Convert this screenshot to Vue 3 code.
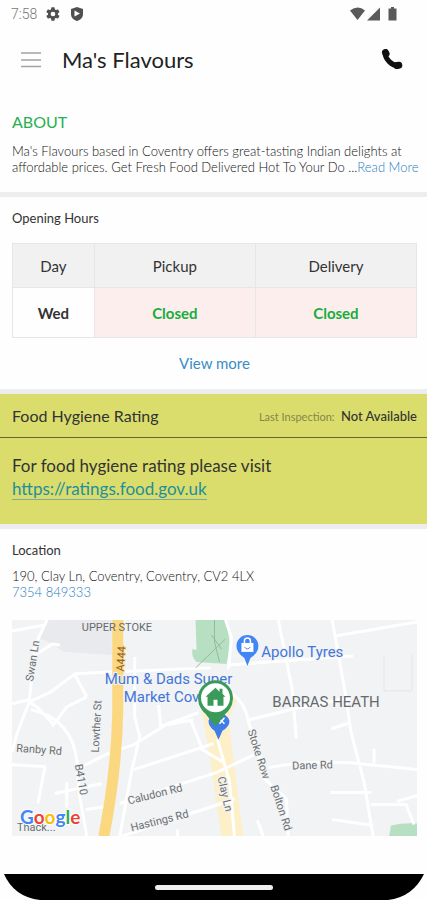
<script setup>
const hours = [{ day: 'Wed', pickup: 'Closed', delivery: 'Closed' }]
</script>

<template>
  <div class="screen">
    <div class="status">
      <div class="status-side">
        <span class="clock">7:58</span>
        <svg class="gear" viewBox="0 0 24 24" width="16" height="16" aria-hidden="true">
          <path fill="#505050" fill-rule="evenodd" d="M19.4 13a7.500 7.500 0 0 0 0-2l2.100-1.600a.5.5 0 0 0 .1-.7l-2-3.400a.5.5 0 0 0-.6-.2l-2.500 1a7.300 7.300 0 0 0-1.700-1l-.4-2.600a.5.5 0 0 0-.5-.5h-4a.5.5 0 0 0-.5.500L9 5.100a7.700 7.700 0 0 0-1.700 1l-2.500-1a.5.5 0 0 0-.6.2l-2 3.400a.5.5 0 0 0 .1.700L4.500 11a8 8 0 0 0 0 2l-2.200 1.600a.5.5 0 0 0-.1.700l2 3.400c.1.200.4.300.6.200l2.500-1a7.300 7.300 0 0 0 1.700 1l.4 2.600c0 .3.200.5.500.5h4c.3 0 .5-.2.500-.5l.4-2.600a7.700 7.700 0 0 0 1.700-1l2.500 1c.2.100.5 0 .6-.2l2-3.400a.5.5 0 0 0-.1-.7zM12 15.500a3.500 3.500 0 1 1 0-7 3.500 3.500 0 0 1 0 7z" />
        </svg>
        <svg class="shield" viewBox="0 0 14 16" width="14" height="16" aria-hidden="true">
          <path fill="#505050" d="M7 1 1 3v5c0 3.500 2.500 6 6 7 3.500-1 6-3.500 6-7V3z" />
          <path fill="#fff" d="M4.500 4.500v6L10 7.500z" />
        </svg>
      </div>
      <svg viewBox="0 0 50 16" width="50" height="16" aria-hidden="true">
        <path fill="#5a5a5a" d="M1 4.500Q9-1.500 16 4.500L8.500 14z" />
        <path fill="#5a5a5a" d="M31 1.500V14.500H18z" />
        <path fill="#5a5a5a" d="M42 1h3v1.500h2.500v12h-8v-12H42z" />
      </svg>
    </div>

    <header class="bar">
      <button class="icon-btn" type="button" aria-label="Menu">
        <svg viewBox="0 0 22 18" width="22" height="18" aria-hidden="true">
          <path fill="none" stroke="#a3a3a3" stroke-width="1.500" d="M1 2h20M1 9h20M1 15.500h20" />
        </svg>
      </button>
      <h1>Ma's Flavours</h1>
      <a class="call" href="tel:7354849333" aria-label="Call">
        <svg viewBox="0 0 22 22" width="22" height="22" aria-hidden="true">
          <path fill="none" stroke="#111" stroke-width="5" d="M4 4.500C5 10.500 10 16 17 17" />
          <path fill="none" stroke="#111" stroke-width="7" stroke-linecap="round" d="M4.500 3.500l.6 1.200M16 16.500l1.800-.2" />
        </svg>
      </a>
    </header>

    <main>
      <section class="about">
        <h2 class="about-title">ABOUT</h2>
        <p class="small">
          Ma's Flavours based in Coventry offers great-tasting Indian delights at affordable prices. Get Fresh Food Delivered Hot To Your Do ...<a href="#about">Read More</a>
        </p>
      </section>

      <section class="opening">
        <h2 class="label">Opening Hours</h2>
        <table>
          <thead>
            <tr><th class="day">Day</th><th>Pickup</th><th>Delivery</th></tr>
          </thead>
          <tbody>
            <tr v-for="row in hours" :key="row.day">
              <td class="day">{{ row.day }}</td>
              <td class="closed">{{ row.pickup }}</td>
              <td class="closed">{{ row.delivery }}</td>
            </tr>
          </tbody>
        </table>
        <a class="more" href="#hours">View more</a>
      </section>

      <section class="hygiene">
        <div class="hygiene-head">
          <h2>Food Hygiene Rating</h2>
          <p class="inspection"><span>Last Inspection:</span> <strong>Not Available</strong></p>
        </div>
        <p class="hygiene-body">
          For food hygiene rating please visit<br />
          <a href="https://ratings.food.gov.uk">https://ratings.food.gov.uk</a>
        </p>
      </section>

      <section class="location">
        <h2 class="label">Location</h2>
        <p class="small">190, Clay Ln, Coventry, Coventry, CV2 4LX<br /><a href="tel:7354849333">7354 849333</a></p>
        <svg class="map" viewBox="11 620 406 217" role="img" aria-label="Map of Clay Ln, Coventry">
          <rect x="11" y="620" width="406" height="217" fill="#f1f3f4" />
          <path fill="#e8eaed" d="M48 620H111V655L64 652 45 641 37 638z" />
          <path fill="#b7e0c3" d="M195 620H225L230 645 226 664 196 662Q190 656 192 649L196 650z" />
          <path fill="#b7e0c3" d="M391 826Q404 823 417 824V837H389z" />
          <path fill="#fdf0c8" d="M199 697 226 690 236 700 228 720 243 837H221L211 768z" />
          <g fill="none" stroke="#fff" stroke-width="3" stroke-linejoin="round">
            <path d="M11 631l33-6M46 620l-12 26-6 58M28 700l-17 4M28 702l22-10 24-18 40-2 96-4M28 703l-12 31-5 18M28 702l9 6 15 16M74 675l12 22M86 697l-20 10-15 20M30 710q48 10 47 68l2 20 7 39M36 654l15-10 8 1" />
            <path d="M11 765l33 2-7 37M66 783v25M54 794l47-10M79 768l28-14 26-9 34-21 31-11M134 657v60l5 20-8 34-12 66M158 705l2 21 33-6M133 770l80-26M119 804l97-31 40-19M120 837l98-32 16-6M177 830v7M85 810l28-4" />
            <path d="M225 620l6 17-3 32M228 665l125-9M278 620l14 70 4 49M332 620l12 67 7 46 13 50 9 54M335 636l82-14M228 692q16 8 20 30l10 32 6 25 22 20 2 38M249 720l45-11 56-11M331 729l19-6M217 740l12 42 5 55M268 768q36-7 82-5l67 7M374 749v14M330 793h41M332 820l41 6M371 805h35l8 20M397 802l20-6M257 821l6 16M217 805l16-4M190 720l12 30 20 12" />
          </g>
          <path fill="none" stroke="#e4e6e8" stroke-width="1" d="M384 655v36h28v-36" />
          <path fill="none" stroke="#fbd77f" stroke-width="11" d="M117 620v92q-1 58-14 125" />
          <path fill="none" stroke="#94b9a0" stroke-width="1" d="M195 668l30-29M214 620v22l5 20M211 635l10 14" />

          <g class="road">
            <text transform="rotate(-81 32 682)" x="32" y="682">Swan Ln</text>
            <text transform="rotate(-87 98 753)" x="98" y="753">Lowther St</text>
            <text transform="rotate(4 15 752)" x="15" y="752">Ranby Rd</text>
            <text transform="rotate(80 74 765)" x="74" y="765">B4110</text>
            <text transform="rotate(-14 128 805)" x="128" y="805">Caludon Rd</text>
            <text transform="rotate(-14 131 832)" x="131" y="832">Hastings Rd</text>
            <text transform="rotate(77 217 778)" x="217" y="778">Clay Ln</text>
            <text transform="rotate(72 247 731)" x="247" y="731">Stoke Row</text>
            <text transform="rotate(72 270 787)" x="270" y="787">Bolton Rd</text>
            <text transform="rotate(-2 292 770)" x="292" y="770">Dane Rd</text>
            <text x="16" y="832">Thack...</text>
            <text class="trunk" transform="rotate(-86 123 672)" x="123" y="672">A444</text>
          </g>
          <text class="area" x="81" y="631">UPPER STOKE</text>
          <text class="area big" x="272" y="707">BARRAS HEATH</text>
          <g class="poi">
            <text x="261" y="657">Apollo Tyres</text>
            <text x="104" y="684">Mum &amp; Dads Super</text>
            <text x="123" y="702">Market Cov</text>
          </g>

          <path fill="#4285f4" d="M247 666l-3-8q-8-5-8-12a11 11 0 0 1 22 0q0 7-8 12z" />
          <path fill="#fff" d="M241 643h12v9h-12z" />
          <path fill="none" stroke="#fff" stroke-width="1.500" d="M244 643v-2a3 3 0 0 1 6 0v2" />
          <path fill="none" stroke="#4285f4" stroke-width="1" d="M244 647q3 4 6 0" />

          <path fill="#3f7ee8" d="M218 740l-4-9q-6-4-6-10a11 11 0 0 1 21 0q0 6-7 10z" />
          <path fill="none" stroke="#fff" stroke-width="1.500" d="M219 724l5-6M220 720l4 4" />
          <path fill="#3a9a5a" d="M198 703q2 7 7 11l10 13 10-13q5-4 7-11z" />
          <circle cx="215" cy="698" r="16" fill="#fff" stroke="#3a9a5a" stroke-width="3" />
          <path fill="#3a9a5a" d="M215 688l-10 9h2v9h6v-6h4v6h6v-9h2l-3-3v-5h-3v3z" />

          <text class="google" x="19" y="825"><tspan fill="#4285f4">G</tspan><tspan fill="#ea4335">o</tspan><tspan fill="#fbbc05">o</tspan><tspan fill="#4285f4">g</tspan><tspan fill="#34a853">l</tspan><tspan fill="#ea4335">e</tspan></text>
        </svg>
      </section>
    </main>

    <div class="nav">
      <svg class="nav-shape" viewBox="0 0 427 26" preserveAspectRatio="none" aria-hidden="true">
        <path d="M4 0H424Q413 23 388 26H40Q14 23 4 0z" />
      </svg>
      <div class="handle"></div>
    </div>
  </div>
</template>

<style>
body {
  margin: 0;
  background: #fff;
}
</style>

<style scoped>
.screen {
  display: flex;
  flex-direction: column;
  min-height: 100vh;
  background: #fefefe;
  color: #333;
  font-family: Lato, "Liberation Sans", sans-serif;
}
h1, h2, p {
  margin: 0;
  font-weight: 400;
}
a {
  color: #3a8dc5;
  text-decoration: none;
}
.status {
  display: flex;
  align-items: center;
  justify-content: space-between;
  height: 28px;
  padding: 0 28px 0 11px;
}
.status-side {
  display: flex;
  align-items: center;
}
.clock {
  color: #777;
  font-family: Roboto, sans-serif;
  font-size: 14px;
  font-weight: 300;
}
.gear {
  margin-left: 8px;
}
.shield {
  margin-left: 9px;
}
.bar {
  display: flex;
  align-items: center;
  height: 63px;
  padding: 0 24px 0 20px;
}
.icon-btn {
  display: flex;
  margin: 0;
  padding: 0;
  border: 0;
  background: none;
}
h1 {
  flex: 1;
  padding-left: 20px;
  color: #222;
  font-size: 22px;
}
.call {
  display: flex;
}
section {
  padding: 0 10px 0 12px;
}
.about {
  padding: 21px 4px 17px 12px;
  border-bottom: 5px solid #ededed;
}
.about-title {
  margin-bottom: 11px;
  color: #26b050;
  font-size: 16px;
  line-height: 20px;
}
.small {
  color: #111;
  font-size: 13px;
  font-weight: 300;
  line-height: 16px;
}
.small a {
  color: #1f7fc0;
}
.opening {
  display: flex;
  flex-direction: column;
  padding-top: 13px;
  padding-bottom: 16px;
  border-bottom: 5px solid #ededf0;
}
.label {
  font-size: 13px;
  line-height: 16px;
}
table {
  width: 100%;
  margin-top: 17px;
  border-collapse: collapse;
  table-layout: fixed;
  border: 1px solid #e3e3e3;
  font-size: 15px;
}
th, td {
  height: 43px;
  padding: 0;
  border: 1px solid #e6e6e6;
  text-align: center;
}
th {
  background: #f1f1f1;
  font-weight: 400;
}
td {
  height: 49px;
  font-weight: 700;
}
.day {
  width: 20%;
}
.closed {
  background: #fdeeee;
  color: #17ad3c;
}
.more {
  align-self: center;
  margin-top: 15px;
  font-size: 15px;
  line-height: 20px;
}
.hygiene {
  padding: 0;
  border-bottom: 5px solid #ededf0;
  background: #dadd6b;
}
.hygiene-head {
  display: flex;
  align-items: center;
  justify-content: space-between;
  height: 43px;
  padding: 0 10px 0 12px;
  border-bottom: 1px solid #65672f;
}
.hygiene-head h2 {
  font-size: 16px;
}
.inspection {
  font-size: 13px;
}
.inspection span {
  margin-right: 3px;
  color: #85864d;
  font-size: 11px;
}
.inspection strong {
  font-weight: 500;
}
.hygiene-body {
  padding: 16px 10px 24px 12px;
  font-size: 17px;
  line-height: 23px;
}
.hygiene-body a {
  border-bottom: 1px solid #76ad9c;
  color: #1e8f9c;
}
.location {
  padding-top: 13px;
}
.location .small {
  margin-top: 10px;
}
.map {
  display: block;
  width: 100%;
  height: auto;
  margin-top: 20px;
  font-family: Roboto, sans-serif;
}
.road {
  fill: #6b6f73;
  stroke: #f1f3f4;
  stroke-width: 2px;
  paint-order: stroke;
  font-size: 11px;
}
.trunk {
  fill: #8a5a2b;
  stroke: #fbd77f;
}
.area {
  fill: #666a6e;
  font-size: 11px;
}
.big {
  font-size: 15px;
}
.poi {
  fill: #4475d8;
  stroke: #f1f3f4;
  stroke-width: 2px;
  paint-order: stroke;
  font-size: 15px;
}
.google {
  stroke: #fff;
  stroke-width: 2px;
  paint-order: stroke;
  font-family: Lato, sans-serif;
  font-size: 19px;
  font-weight: 700;
}
.nav {
  display: grid;
  margin-top: auto;
}
.nav-shape {
  grid-area: 1 / 1;
  width: 100%;
  height: 26px;
}
.handle {
  grid-area: 1 / 1;
  place-self: center;
  width: 118px;
  height: 5px;
  border-radius: 3px;
  background: #eee;
}
</style>
